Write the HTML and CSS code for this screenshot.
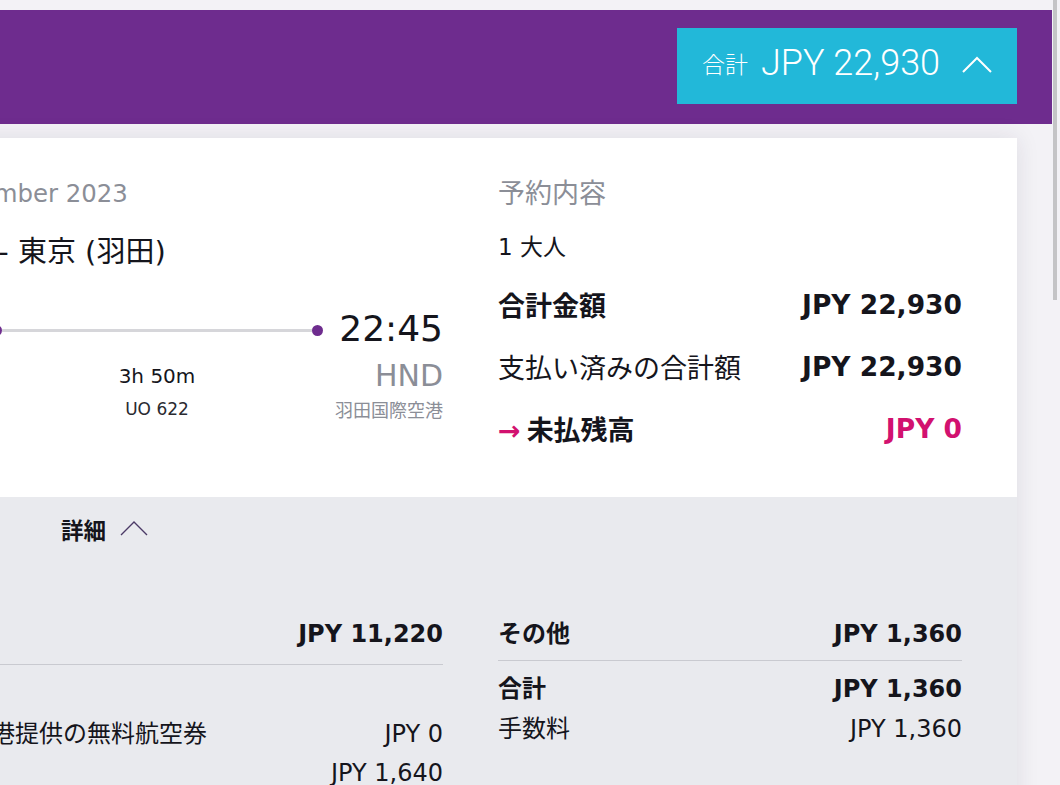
FILE: index.html
```html
<!DOCTYPE html>
<html lang="ja">
<head>
<meta charset="utf-8">
<title>予約内容</title>
<link rel="stylesheet" href="styles.css">
</head>
<body>
<div class="scrollbar"><div class="thumb"></div></div>
<header class="topbar">
  <button class="total-btn" type="button">
    <span class="total-label">合計</span>
    <span class="total-amount">JPY 22,930</span>
    <svg class="total-chev" width="32" height="20" viewBox="0 0 32 20"><polyline points="2,18 16,4 30,18" fill="none" stroke="#ffffff" stroke-width="2"/></svg>
  </button>
</header>
<main class="main">
  <section class="card">
    <div class="summary">
      <div class="flight">
        <div class="date">Fri 3 November 2023</div>
        <div class="route">香港 - 東京 (羽田)</div>
        <div class="timeline">
          <div class="stop dep">
            <div class="time">18:55</div>
            <div class="code">HKG</div>
            <div class="airport">香港国際空港</div>
          </div>
          <div class="mid">
            <div class="track"><span class="dot"></span><span class="line"></span><span class="dot"></span></div>
            <div class="dur">3h 50m</div>
            <div class="fno">UO 622</div>
          </div>
          <div class="stop arr">
            <div class="time">22:45</div>
            <div class="code">HND</div>
            <div class="airport">羽田国際空港</div>
          </div>
        </div>
      </div>
      <div class="booking">
        <div class="booking-title">予約内容</div>
        <div class="pax">1 大人</div>
        <div class="sum-row strong first"><span>合計金額</span><span class="amt">JPY 22,930</span></div>
        <div class="sum-row"><span>支払い済みの合計額</span><span class="amt">JPY 22,930</span></div>
        <div class="sum-row strong due"><span><span class="arrow">→</span>未払残高</span><span class="amt pink">JPY 0</span></div>
      </div>
    </div>
    <div class="details">
      <div class="details-toggle">
        <span>詳細</span>
        <svg class="toggle-chev" width="28" height="16" viewBox="0 0 28 16"><polyline points="1,15 14,2 27,15" fill="none" stroke="#4b3a66" stroke-width="1.4"/></svg>
      </div>
      <div class="details-grid">
        <div class="dcol left">
          <div class="drow head"><span>航空運賃</span><span class="amt">JPY 11,220</span></div>
          <div class="drow bold sub-first"><span>大人 x 1</span><span></span></div>
          <div class="drow"><span>【特典】香港提供の無料航空券</span><span class="amt">JPY 0</span></div>
          <div class="drow short"><span>運賃</span><span class="amt">JPY 1,640</span></div>
        </div>
        <div class="dcol right">
          <div class="drow head"><span>その他</span><span class="amt">JPY 1,360</span></div>
          <div class="drow bold sub-first"><span>合計</span><span class="amt">JPY 1,360</span></div>
          <div class="drow"><span>手数料</span><span class="amt">JPY 1,360</span></div>
        </div>
      </div>
    </div>
  </section>
</main>
</body>
</html>
```

FILE: styles.css
```css
html, body {
  margin: 0;
  padding: 0;
}
body {
  background: #f3f2f6;
  font-family: "DejaVu Sans", "Noto Sans CJK JP", sans-serif;
  color: #15151c;
  overflow: hidden;
  width: 1060px;
  height: 785px;
  padding-top: 10px;
  box-sizing: border-box;
}

.scrollbar {
  position: fixed;
  top: 0;
  right: 0;
  width: 8px;
  height: 785px;
  background: #f3f2f6;
}
.thumb {
  width: 4px;
  margin-left: 1px;
  height: 300px;
  background: #c4c4c6;
}

.topbar {
  height: 114px;
  width: 1052px;
  background: #6e2c8e;
  box-sizing: border-box;
  display: flex;
  justify-content: flex-end;
  align-items: flex-start;
  padding: 18px 35px 0 0;
}
.total-btn {
  height: 76px;
  width: 340px;
  border: none;
  background: #22b8d9;
  color: #ffffff;
  display: flex;
  align-items: center;
  padding: 0 24px 6px 25px;
  box-sizing: border-box;
  cursor: pointer;
}
.total-label {
  font-family: "Noto Sans CJK JP", sans-serif;
  font-weight: 300;
  font-size: 23px;
  margin-right: 13px;
  margin-top: -1px;
}
.total-amount {
  font-family: Roboto, "Liberation Sans", sans-serif;
  font-weight: 300;
  font-size: 36px;
}
.total-chev {
  margin-left: auto;
  margin-top: 2px;
}

.main {
  margin-top: 14px;
  margin-left: -160px;
  width: 1177px;
}
.card {
  background: #ffffff;
  box-shadow: 0 0 22px rgba(40, 30, 60, 0.10);
}

.summary {
  display: grid;
  grid-template-columns: 572px 464px;
  column-gap: 55px;
  padding: 40px 55px 51px 31px;
}

.date {
  font-size: 24.4px;
  line-height: 32px;
  color: #8b8e97;
  white-space: nowrap;
}
.route {
  font-size: 29px;
  line-height: 36px;
  margin-top: 24px;
  margin-left: 60px;
  color: #15151c;
  white-space: nowrap;
}

.timeline {
  display: grid;
  grid-template-columns: 104px 1fr 104px;
  margin-top: 39px;
}
.stop {
  white-space: nowrap;
}
.stop .time {
  font-size: 36px;
  line-height: 40px;
  color: #15151c;
}
.stop .code {
  font-size: 30px;
  line-height: 40px;
  margin-top: 7px;
  color: #8b8e97;
}
.stop .airport {
  font-family: "Noto Sans CJK JP", sans-serif;
  font-size: 18px;
  line-height: 26px;
  color: #8b8e97;
}
.arr {
  display: flex;
  flex-direction: column;
  align-items: flex-end;
}
.mid {
  text-align: center;
}
.track {
  height: 40px;
  display: flex;
  align-items: center;
  padding: 0 16px;
  margin-top: 1px;
}
.dot {
  width: 11px;
  height: 11px;
  border-radius: 50%;
  background: #6e2c8e;
  flex: none;
}
.line {
  flex: 1;
  height: 3px;
  background: #d6d6da;
}
.dur {
  font-size: 20px;
  line-height: 40px;
  margin-top: 6px;
  color: #15151c;
}
.fno {
  font-size: 17px;
  line-height: 26px;
  color: #2a2a30;
}

.booking-title {
  font-family: "Noto Sans CJK JP", sans-serif;
  font-size: 27px;
  line-height: 32px;
  color: #8b8e97;
  margin-top: -2px;
}
.pax {
  font-size: 23px;
  line-height: 32px;
  margin-top: 23px;
}
.sum-row {
  display: flex;
  justify-content: space-between;
  align-items: center;
  height: 36px;
  margin-top: 26px;
  font-size: 27px;
}
.sum-row.first {
  margin-top: 23px;
}
.sum-row.strong > span:first-child {
  font-weight: 700;
}
.sum-row .amt {
  font-weight: 700;
  font-size: 26.5px;
}
.arrow {
  color: #d2116f;
  margin-right: 6px;
}
.pink {
  color: #d2116f;
}

.details {
  background: #e9eaee;
  padding: 16px 55px 120px 31px;
}
.details-toggle {
  display: flex;
  align-items: center;
  margin-left: 190px;
  height: 32px;
  font-family: "Noto Sans CJK JP", sans-serif;
  font-weight: 700;
  font-size: 22.5px;
}
.toggle-chev {
  margin-left: 14px;
  margin-top: -2px;
}
.details-grid {
  display: grid;
  grid-template-columns: 572px 464px;
  column-gap: 55px;
  margin-top: 71px;
}
.drow {
  display: flex;
  justify-content: space-between;
  align-items: baseline;
  height: 40px;
  line-height: 40px;
  font-size: 24px;
  white-space: nowrap;
}
.drow.head {
  height: 36px;
  line-height: 36px;
  font-weight: 700;
  padding-bottom: 12px;
  border-bottom: 1px solid #c9cad0;
}
.dcol.right .drow.head {
  padding-bottom: 8px;
}
.drow.bold {
  font-weight: 700;
}
.drow.short {
  height: 38px;
  line-height: 38px;
}
.dcol.left .sub-first {
  margin-top: 9px;
}
.dcol.right .sub-first {
  margin-top: 8px;
}
```
